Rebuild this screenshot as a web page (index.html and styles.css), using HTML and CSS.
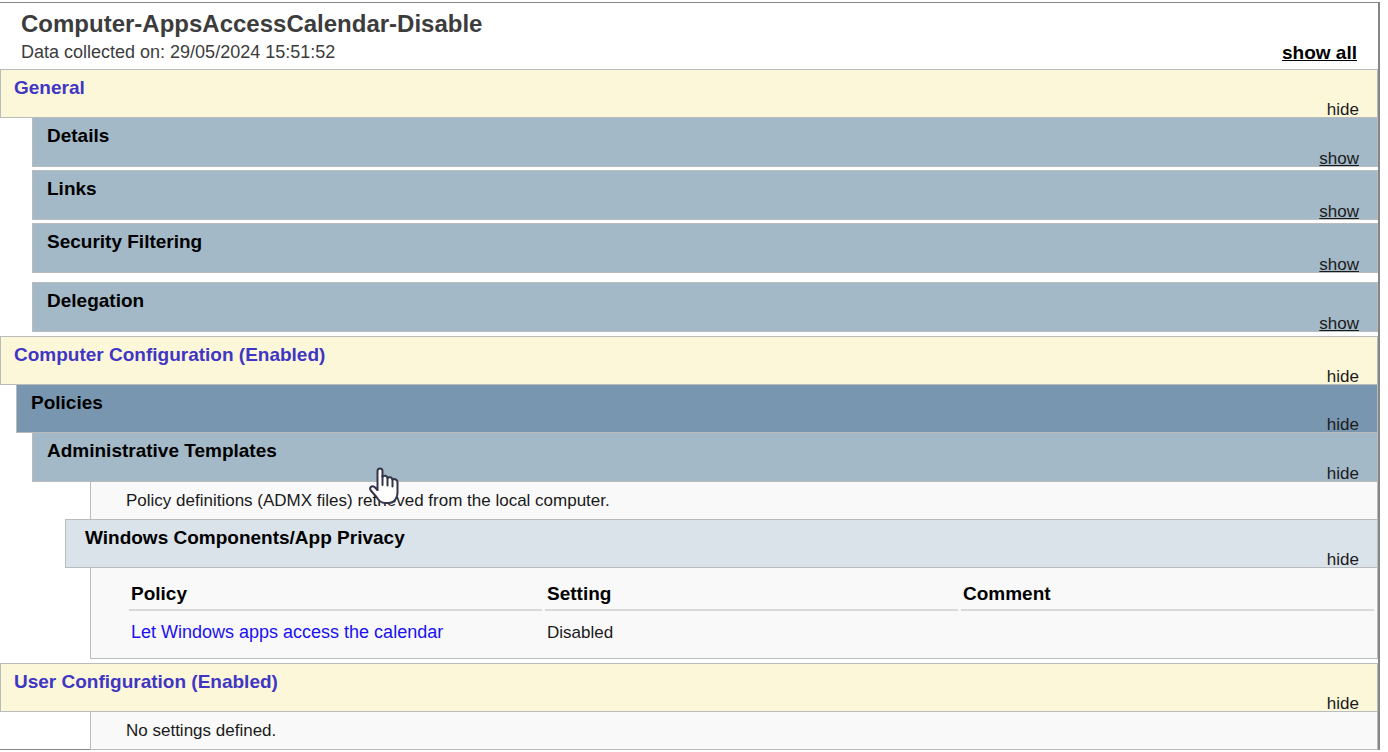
FILE: index.html
```html
<!DOCTYPE html>
<html lang="en">
<head>
<meta charset="utf-8">
<title>Computer-AppsAccessCalendar-Disable</title>
<link rel="stylesheet" href="styles.css">
</head>
<body>
<main class="report">
  <header class="report-head">
    <div>
      <h1 class="report-title">Computer-AppsAccessCalendar-Disable</h1>
      <p class="collected">Data collected on: 29/05/2024 15:51:52</p>
    </div>
    <a class="show-all" href="#">show all</a>
  </header>

  <section class="section">
    <div class="bar bar-top"><h2 class="bar-title">General</h2><a class="toggle" href="#">hide</a></div>
    <div class="bar bar-sub"><h3 class="bar-title">Details</h3><a class="toggle closed" href="#">show</a></div>
    <div class="bar bar-sub gap-small"><h3 class="bar-title">Links</h3><a class="toggle closed" href="#">show</a></div>
    <div class="bar bar-sub gap-small"><h3 class="bar-title">Security Filtering</h3><a class="toggle closed" href="#">show</a></div>
    <div class="bar bar-sub gap-large"><h3 class="bar-title">Delegation</h3><a class="toggle closed" href="#">show</a></div>
  </section>

  <section class="section">
    <div class="bar bar-top"><h2 class="bar-title">Computer Configuration (Enabled)</h2><a class="toggle" href="#">hide</a></div>
    <div class="bar bar-policies"><h3 class="bar-title">Policies</h3><a class="toggle" href="#">hide</a></div>
    <div class="bar bar-sub"><h4 class="bar-title">Administrative Templates</h4><a class="toggle" href="#">hide</a>
      <svg class="pointer" viewBox="0 0 30 38" aria-hidden="true"><path d="M8.500 24V4C8.500 .5 13.500 .5 13.500 4V10C15 8 18 8.500 18.500 11C20 9.500 23 10 23.500 12.500C25.500 11.500 28.500 12.500 28.500 15.500V26C28.500 31 25 36 20 36H16C12 36 9.500 33.500 7.500 30L1.800 23.500C-.2 20.500 3 18 5.500 20L8.500 23" fill="#fff" stroke="#35354a" stroke-width="2" stroke-linejoin="round"/><path d="M13.500 9V18M18.500 10.500V18.500M23.500 12V19.500" fill="none" stroke="#35354a" stroke-width="2" stroke-linecap="round"/></svg>
    </div>
    <div class="content"><p class="note">Policy definitions (ADMX files) retrieved from the local computer.</p></div>
    <div class="bar bar-category"><h5 class="bar-title">Windows Components/App Privacy</h5><a class="toggle" href="#">hide</a></div>
    <div class="content">
      <table class="settings">
        <thead><tr><th scope="col">Policy</th><th scope="col">Setting</th><th scope="col">Comment</th></tr></thead>
        <tbody><tr><td><a class="policy-link" href="#">Let Windows apps access the calendar</a></td><td>Disabled</td><td></td></tr></tbody>
      </table>
    </div>
  </section>

  <section class="section">
    <div class="bar bar-top"><h2 class="bar-title">User Configuration (Enabled)</h2><a class="toggle" href="#">hide</a></div>
    <div class="content"><p class="note">No settings defined.</p></div>
  </section>
</main>
</body>
</html>
```

FILE: styles.css
```css
* { box-sizing: border-box; }

body {
  margin: 0;
  padding: 2px 8px 0 0;
  background: #fff;
  color: #1a1a1a;
  font: 17px/20px "Liberation Sans", Arial, sans-serif;
}

h1, h2, h3, h4, h5, p { margin: 0; }

.report {
  border: 2px solid #868686;
  border-width: 1px 2px 1px 0;
}

.report-head {
  display: flex;
  justify-content: space-between;
  align-items: flex-end;
  padding: 5px 21px 4px 21px;
  color: #3c3c3c;
}

.report-title {
  font-size: 24px;
  line-height: 32px;
}

.collected {
  font-size: 18px;
  line-height: 25px;
}

.show-all {
  color: #000;
  font-size: 19px;
  font-weight: bold;
  line-height: 24px;
}

.section + .section { margin-top: 4px; }
.section:last-child { margin-bottom: -1px; }

.bar {
  position: relative;
  display: flex;
  justify-content: space-between;
  min-height: 50px;
  margin-top: -1px;
  padding: 8px 18px 0 14px;
  border: 1px solid #b9bcbd;
}

.bar-title {
  color: #000;
  font-size: 19px;
  line-height: 20px;
}

.bar-top {
  min-height: 49px;
  margin-top: 0;
  padding-left: 13px;
  background: #fdf7d9;
}

.bar-top .bar-title { color: #4036c4; }

.bar-policies {
  min-height: 49px;
  margin-left: 16px;
  background: #7996b0;
}

.bar-sub {
  margin-left: 32px;
  background: #a4b9c8;
}

.bar-category {
  min-height: 49px;
  margin-left: 65px;
  padding-left: 19px;
  background: #dae2ea;
}

.gap-small { margin-top: 3px; }
.gap-large { margin-top: 9px; }

.toggle {
  align-self: flex-end;
  color: #1a1a1a;
  line-height: 14px;
  text-decoration: none;
}

.closed { text-decoration: underline; }

.pointer {
  position: absolute;
  z-index: 1;
  top: 34px;
  left: 336px;
  width: 30px;
  height: 38px;
}

.content {
  margin: -1px 0 0 90px;
  border: 1px solid #b9bcbd;
  background: #f9f9f9;
}

.note {
  padding: 9px 35px 8px;
}

.settings {
  width: 100%;
  padding: 11px 0 10px 35px;
  border-spacing: 3px 0;
  table-layout: fixed;
}

.settings th,
.settings td {
  padding: 5px 2px;
  text-align: left;
}

.settings th {
  border-bottom: 2px solid #d9d9d9;
  color: #000;
  font-size: 19px;
}

.settings td { padding-top: 11px; }

.policy-link {
  color: #1a10f0;
  font-size: 18px;
  text-decoration: none;
}
```
